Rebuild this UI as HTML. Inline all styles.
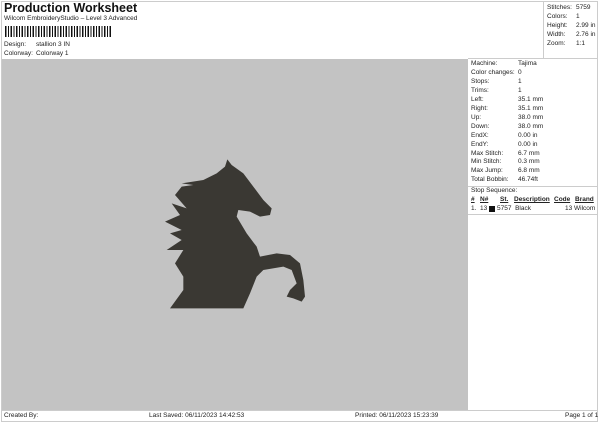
<!DOCTYPE html>
<html><head><meta charset="utf-8"><style>
body{margin:0;width:600px;height:424px;background:#fff;font-family:"Liberation Sans",sans-serif;color:#222;position:relative;overflow:hidden}
.a{position:absolute;font-size:6.5px;white-space:nowrap}
</style></head><body>
<div style="position:absolute;left:1px;top:1px;width:597px;height:421px;border:1px solid #ccc;box-sizing:border-box"></div>
<div class="a" style="left:4px;top:1px;font-size:12.5px;font-weight:bold;color:#111">Production Worksheet</div>
<div class="a" style="left:4px;top:15px">Wilcom EmbroideryStudio – Level 3 Advanced</div>
<div style="position:absolute;left:5px;top:26px;width:107px;height:11px;background:repeating-linear-gradient(90deg,#111 0 1.5px,#fff 1.5px 3px,#111 3px 4px,#fff 4px 5.5px)"></div>
<div class="a" style="left:4px;top:41px">Design:</div><div class="a" style="left:36px;top:41px">stallion 3 IN</div>
<div class="a" style="left:4px;top:50px">Colorway:</div><div class="a" style="left:36px;top:50px">Colorway 1</div>
<div style="position:absolute;left:2px;top:59px;width:466px;height:351px;background:#c3c3c3"></div>
<div style="position:absolute;left:543px;top:1px;width:1px;height:57px;background:#ccc"></div>
<div style="position:absolute;left:468px;top:58px;width:130px;height:1px;background:#ccc"></div>
<div class="a" style="left:547px;top:3px;line-height:9px">Stitches:<br>Colors:<br>Height:<br>Width:<br>Zoom:</div>
<div class="a" style="left:576px;top:3px;line-height:9px">5759<br>1<br>2.99 in<br>2.76 in<br>1:1</div>
<div class="a" style="left:471px;top:60px;line-height:8.95px">Machine:<br>Color changes:<br>Stops:<br>Trims:<br>Left:<br>Right:<br>Up:<br>Down:<br>EndX:<br>EndY:<br>Max Stitch:<br>Min Stitch:<br>Max Jump:<br>Total Bobbin:</div>
<div class="a" style="left:518px;top:60px;line-height:8.95px">Tajima<br>0<br>1<br>1<br>35.1 mm<br>35.1 mm<br>38.0 mm<br>38.0 mm<br>0.00 in<br>0.00 in<br>6.7 mm<br>0.3 mm<br>6.8 mm<br>46.74ft</div>
<div style="position:absolute;left:468px;top:186px;width:130px;height:1px;background:#ccc"></div>
<div class="a" style="left:471px;top:187px">Stop Sequence:</div>
<div class="a" style="left:471px;top:196px;text-decoration:underline;font-weight:bold">#</div>
<div class="a" style="left:480px;top:196px;text-decoration:underline;font-weight:bold">N#</div>
<div class="a" style="left:500px;top:196px;text-decoration:underline;font-weight:bold">St.</div>
<div class="a" style="left:514px;top:196px;text-decoration:underline;font-weight:bold">Description</div>
<div class="a" style="left:554px;top:196px;text-decoration:underline;font-weight:bold">Code</div>
<div class="a" style="left:575px;top:196px;text-decoration:underline;font-weight:bold">Brand</div>
<div class="a" style="left:471px;top:205px">1.&nbsp; 13</div>
<div style="position:absolute;left:489px;top:206px;width:6px;height:6px;background:#111"></div>
<div class="a" style="left:497px;top:205px">5757&nbsp; Black</div>
<div class="a" style="left:565px;top:205px">13 Wilcom</div>
<div style="position:absolute;left:468px;top:214px;width:130px;height:1px;background:#ccc"></div>
<div style="position:absolute;left:2px;top:410px;width:596px;height:1px;background:#ccc"></div>
<div class="a" style="left:4px;top:412px">Created By:</div>
<div class="a" style="left:149px;top:412px">Last Saved: 06/11/2023 14:42:53</div>
<div class="a" style="left:355px;top:412px">Printed: 06/11/2023 15:23:39</div>
<div class="a" style="left:565px;top:412px">Page 1 of 1</div>
<svg style="position:absolute;left:150px;top:150px" width="160" height="170" viewBox="0 0 480 510">
<path fill="#3a3833" d="M232 28 L245 45 L280 70 L340 150 L365 175 L360 195 L330 200 L300 185 L265 180 L260 200 L290 250 L320 290 L330 320 L380 310 L420 315 L450 340 L460 390 L465 440 L455 455 L430 445 L410 440 L420 420 L440 400 L425 360 L400 350 L340 360 L320 380 L300 430 L280 475 L60 475 L100 420 L100 380 L75 340 L100 300 L50 300 L95 270 L60 250 L95 240 L45 215 L90 195 L65 160 L110 175 L75 135 L95 110 L130 105 L95 100 L160 90 L200 70 L225 50 Z"/>
</svg>
</body></html>
